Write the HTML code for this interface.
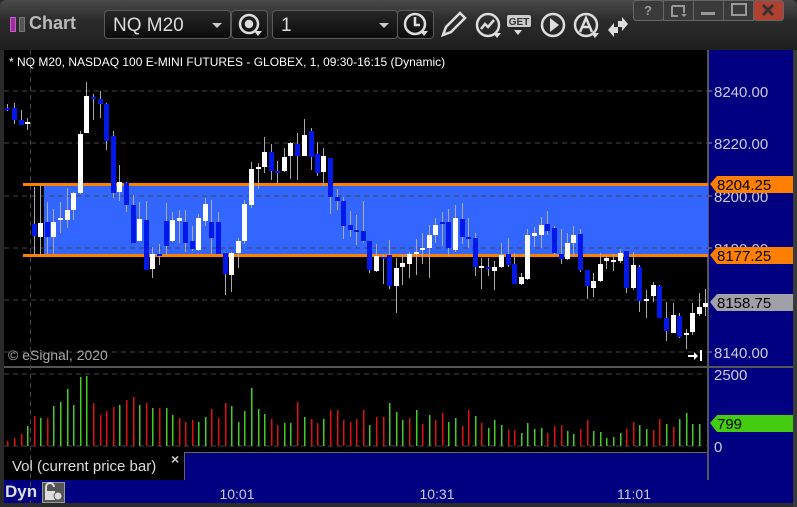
<!DOCTYPE html>
<html><head><meta charset="utf-8"><style>
*{margin:0;padding:0;box-sizing:border-box}
body{width:797px;height:507px;overflow:hidden;background:#2a2a2a;font-family:"Liberation Sans",sans-serif;position:relative}
.abs{position:absolute}
#title{left:0;top:0;width:797px;height:50px;background:linear-gradient(#4a4a4a,#2c2c2c 40%,#1e1e1e);border-radius:6px 6px 0 0}
.dd{border:1px solid #5a5a5a;border-radius:4px;background:linear-gradient(#262626,#0c0c0c);color:#ddd;font-size:19px}
</style></head><body>
<div id="title" class="abs"></div>
<div class="abs" style="left:10px;top:17px;width:6px;height:15px;background:#a02aa0;border:1px solid #c060c0"></div>
<div class="abs" style="left:19px;top:17px;width:6px;height:15px;background:#555;border:1px solid #777"></div>
<div class="abs" style="left:29px;top:13px;color:#bbb;font-weight:bold;font-size:18px">Chart</div>
<div class="abs dd" style="left:104px;top:10px;width:127px;height:29px;padding:4px 0 0 8px">NQ M20<span class="abs" style="left:107px;top:12px;border:5px solid transparent;border-top:5px solid #ccc;border-bottom:0"></span></div>
<div class="abs dd" style="left:231px;top:10px;width:37px;height:29px"></div>
<div class="abs dd" style="left:272px;top:10px;width:126px;height:29px;padding:4px 0 0 8px">1<span class="abs" style="left:106px;top:12px;border:5px solid transparent;border-top:5px solid #ccc;border-bottom:0"></span></div>
<div class="abs dd" style="left:397px;top:10px;width:37px;height:29px"></div>
<svg class="abs" style="left:0;top:0" width="797" height="50">
<g fill="none" stroke="#ddd" stroke-width="2.5">
<circle cx="249" cy="24" r="9"/><circle cx="249" cy="24" r="3" fill="#ddd"/>
<circle cx="415" cy="24" r="10"/><path d="M415 17v8h5"/>
<path d="M443 35l3-8 14-14 5 5-14 14z"/>
<circle cx="488" cy="25" r="11"/><path d="M481 29l4-5 3 3 6-7"/>
<circle cx="553" cy="25" r="11"/>
<circle cx="586" cy="25" r="11"/><path d="M580 32l6-14 6 14M582 27h8"/>
</g>
<path d="M550 18l9 7-9 7z" fill="#ddd"/>
<rect x="507" y="15" width="24" height="12" rx="2" fill="#ccc"/><text x="519" y="25" font-size="10" font-weight="bold" text-anchor="middle" fill="#333" font-family="Liberation Sans">GET</text>
<path d="M608 26l6-7v4h4v6h-4v4zM628 20l-6 7v-4h-4v-6h4v-4z" fill="#ddd" transform="translate(0,4)"/>
<g fill="#ddd"><path d="M254 31h8l-4 5z"/><path d="M420 31h8l-4 5z"/><path d="M493 33h8l-4 5z"/><path d="M514 30h8l-4 5z"/><path d="M591 33h8l-4 5z"/></g>
<g stroke="#666"><rect x="633.5" y="0.5" width="30" height="20" fill="#3a3a3a" rx="3"/><rect x="663.5" y="0.5" width="30" height="20" fill="#3a3a3a"/><rect x="693.5" y="0.5" width="30" height="20" fill="#3a3a3a"/><rect x="723.5" y="0.5" width="30" height="20" fill="#3a3a3a"/><rect x="753.5" y="0.5" width="30" height="20" fill="#b04030" rx="3"/></g>
<text x="648" y="15" font-size="13" font-weight="bold" fill="#999" text-anchor="middle" font-family="Liberation Sans">?</text>
<path d="M672 6h12v7M672 6v10h6" stroke="#999" stroke-width="2" fill="none"/><path d="M681 14h6l-3 3z" fill="#999"/>
<rect x="701" y="12" width="14" height="3" fill="#999"/>
<rect x="732" y="4" width="14" height="11" stroke="#999" stroke-width="2" fill="none"/>
<path d="M763 5l10 10M773 5l-10 10" stroke="#333" stroke-width="3"/>
</svg>
<svg class="abs" style="left:0;top:50px" width="797" height="457" id="main"></svg>
<div class="abs" style="left:9px;top:55px;color:#fff;font-size:12px">* NQ M20, NASDAQ 100 E-MINI FUTURES - GLOBEX, 1, 09:30-16:15 (Dynamic)</div>
<div class="abs" style="left:8px;top:347px;color:#aaa;font-size:14px">© eSignal, 2020</div>
<div class="abs" style="left:12px;top:458px;color:#ddd;font-size:15px">Vol (current price bar)</div>
<div class="abs" style="left:171px;top:451px;color:#ccc;font-size:14px;font-weight:bold">×</div>
<div class="abs" style="left:5px;top:482px;color:#ddd;font-size:17px;font-weight:bold">Dyn</div>
<script>
var s='';
function r(x,y,w,h,c){s+='<rect x="'+x+'" y="'+y+'" width="'+w+'" height="'+h+'" fill="'+c+'"/>';}
function t(x,y,txt,c,sz,a){s+='<text x="'+x+'" y="'+y+'" fill="'+c+'" font-size="'+(sz||15)+'" font-family="Liberation Sans" '+(a?'text-anchor="'+a+'"':'')+'>'+txt+'</text>';}
var O=-50;
r(0,0,797,457,'#2a2a2a');
r(4,0,704,317,'#000');
r(708,0,85,453,'#000080');
r(4,318,704,85,'#000');
r(4,403,180,28,'#000');
r(184,403,524,27,'#000080');
s+='<rect x="184.5" y="402.5" width="524" height="28" fill="none" stroke="#666"/>';
r(4,430,789,23,'#000080');
r(4,316,789,2,'#555');
r(707,0,2,430,'#555');
r(793,0,4,457,'#3a3a3a');
// band
r(44,185+O,664,70,'#3366ff');
// grid
[91,143,196,248,300,352].forEach(function(y){s+='<line x1="4" x2="708" y1="'+(y+O)+'" y2="'+(y+O)+'" stroke="#444" stroke-dasharray="5,4"/>';});
s+='<line x1="30.5" x2="30.5" y1="0" y2="453" stroke="#444" stroke-dasharray="5,4"/>';
s+='<line x1="4" x2="708" y1="324" y2="324" stroke="#444" stroke-dasharray="5,4"/>';
s+='<line x1="4" x2="708" y1="396" y2="396" stroke="#444" stroke-dasharray="5,4"/>';
r(23,183+O,685,3,'#ff8000');r(23,254+O,685,3,'#ff8000');
var C=[[7,104,111,108,110,1],[14,103,124,108,120,1],[21,110,124,120,125,1],[27,118,130,122,124,0],[34,187,255,224,236,1],[40,185,255,223,237,0],[47,202,254,222,237,1],[53,209,254,222,237,0],[60,202,233,218,220,0],[67,188,228,210,220,0],[73,192,220,193,210,0],[80,131,194,134,193,0],[86,82,133,96,133,0],[93,94,120,97,99,1],[100,91,118,99,104,1],[106,103,150,104,141,1],[113,131,198,136,193,1],[119,165,201,182,192,0],[126,182,212,183,205,1],[133,195,243,205,243,1],[139,202,241,219,241,0],[146,201,270,220,270,1],[152,247,278,254,269,0],[159,244,265,254,256,1],[166,203,255,221,246,1],[172,212,242,220,241,0],[179,210,243,218,221,0],[185,210,252,222,243,1],[192,226,251,241,249,1],[198,214,251,218,250,0],[205,198,226,204,221,0],[211,200,254,222,238,1],[218,212,255,222,254,1],[225,252,295,253,274,1],[231,252,292,253,275,0],[238,238,268,241,253,0],[244,200,244,204,241,0],[251,162,208,169,205,0],[258,163,189,167,169,0],[264,137,173,152,167,0],[271,144,180,152,171,1],[277,161,184,171,173,1],[284,148,172,157,171,0],[290,142,179,143,156,0],[297,133,180,144,156,1],[304,119,156,135,156,0],[311,128,170,131,157,1],[317,142,176,154,173,1],[323,148,186,156,172,0],[330,158,214,158,197,1],[337,189,210,197,201,1],[343,197,239,201,226,1],[350,211,237,225,230,1],[356,215,245,230,232,1],[363,201,243,231,241,1],[369,241,273,241,270,1],[376,244,272,256,271,0],[383,254,284,257,259,1],[389,240,289,255,286,1],[396,258,313,268,286,0],[402,254,285,263,267,0],[409,252,278,254,264,0],[416,239,275,252,254,0],[422,233,264,248,250,0],[429,225,278,235,248,0],[435,218,243,225,235,0],[442,212,246,222,224,1],[448,209,257,222,248,1],[455,205,252,218,250,0],[462,203,244,219,237,1],[468,218,248,237,239,1],[475,233,276,238,267,1],[481,258,289,266,268,0],[488,258,276,267,269,1],[494,261,290,267,271,0],[501,243,268,255,267,0],[508,238,267,254,265,1],[514,253,284,264,284,1],[521,273,285,277,284,0],[527,229,280,235,279,0],[534,227,247,233,236,0],[541,217,248,225,235,0],[547,211,235,224,231,1],[554,226,255,228,253,1],[561,229,264,254,259,1],[567,233,260,243,259,0],[573,226,257,235,243,0],[580,229,272,234,270,1],[587,270,299,270,286,1],[593,273,297,281,288,0],[600,253,282,264,281,0],[606,256,269,258,261,0],[613,254,271,260,262,0],[620,249,263,253,261,0],[626,251,293,251,288,1],[633,252,290,265,288,0],[639,265,312,267,301,1],[646,290,318,299,301,0],[653,282,302,285,296,0],[659,285,318,286,318,1],[666,302,341,318,331,1],[673,303,333,315,333,0],[679,313,338,316,337,1],[686,329,349,333,335,0],[692,303,335,313,332,0],[699,293,316,307,314,0],[705,289,316,303,307,0]];
C.forEach(function(c){var x=c[0];s+='<line x1="'+(x+0.5)+'" x2="'+(x+0.5)+'" y1="'+(c[1]+O)+'" y2="'+(c[2]+O)+'" stroke="#aaa"/>';var h=Math.max(2,c[4]-c[3]);r(x-2,c[3]+O,5,h,c[5]?'#0018e8':'#fff');});
var V=[[7,441,0],[14,438,0],[21,434,0],[27,426,1],[34,416,0],[40,418,1],[47,418,0],[53,406,1],[60,402,1],[67,389,1],[73,405,1],[80,377,1],[86,376,1],[93,403,0],[100,415,0],[106,411,0],[113,407,0],[119,405,1],[126,400,0],[133,397,0],[139,405,1],[146,403,0],[152,408,1],[159,408,0],[166,408,1],[172,415,1],[179,418,0],[185,422,0],[192,420,0],[198,422,1],[205,417,1],[211,409,0],[218,418,0],[225,403,0],[231,406,1],[238,422,1],[244,411,1],[251,388,1],[258,409,1],[264,414,1],[271,419,0],[277,425,0],[284,423,1],[290,423,1],[297,402,0],[304,417,1],[311,419,0],[317,423,0],[323,419,1],[330,410,0],[337,410,0],[343,420,0],[350,422,0],[356,419,0],[363,410,0],[369,425,1],[376,417,0],[383,417,0],[389,403,1],[396,412,1],[402,420,1],[409,418,0],[416,410,1],[422,424,0],[429,415,1],[435,420,0],[442,413,0],[448,422,1],[455,418,1],[462,426,0],[468,410,0],[475,416,1],[481,423,0],[488,428,1],[494,420,1],[501,425,1],[508,430,0],[514,430,0],[521,433,1],[527,423,1],[534,429,1],[541,428,1],[547,433,0],[554,426,0],[561,425,0],[567,431,1],[573,434,1],[580,429,0],[587,420,0],[593,431,1],[600,432,1],[606,438,1],[613,437,1],[620,433,1],[626,429,0],[633,422,0],[639,425,1],[646,429,1],[653,430,0],[659,419,0],[666,424,1],[673,427,0],[679,419,1],[686,413,1],[692,424,1],[699,424,1]];
V.forEach(function(v){r(v[0],v[1]+O,1.5,446-v[1],v[2]?'#44cc22':'#dd1111');});
// axis labels
[[8240,91],[8220,143],[8200,196],[8180,248],[8140,352]].forEach(function(a){t(714,a[1]+O+6,a[0]+'.00','#ccd');s+='<line x1="708" x2="712" y1="'+(a[1]+O)+'" y2="'+(a[1]+O)+'" stroke="#888"/>';});
function tag(y,txt,bg){s+='<path d="M710 '+(y+O)+'l7 -8h76v17h-76z" fill="'+bg+'"/>';t(717,y+O+6,txt,'#000',15);}
tag(184,'8204.25','#ff8000');tag(255,'8177.25','#ff8000');tag(302,'8158.75','#a0a0a8');
t(714,380+O,'2500','#ccd');t(714,452+O,'0','#ccd');
tag(423,'799','#44cc11');
t(237,499+O,'10:01','#ccd',14,'middle');t(437,499+O,'10:31','#ccd',14,'middle');t(634,499+O,'11:01','#ccd',14,'middle');
// lock icon
s+='<rect x="42.5" y="432.5" width="22" height="20" fill="#555" stroke="#999"/><path d="M46 441v-4a4 4 0 0 1 8 0" stroke="#ddd" stroke-width="2" fill="none"/><rect x="45" y="441" width="10" height="9" fill="#ddd"/><circle cx="58" cy="446" r="4" fill="#ddd" stroke="#555"/>';
// arrow icon
s+='<path d="M688 305h6v-3l4 4-4 4v-3h-6z" fill="#fff"/><rect x="700" y="300" width="2" height="11" fill="#fff"/>';
document.getElementById('main').innerHTML=s;
</script>
</body></html>
